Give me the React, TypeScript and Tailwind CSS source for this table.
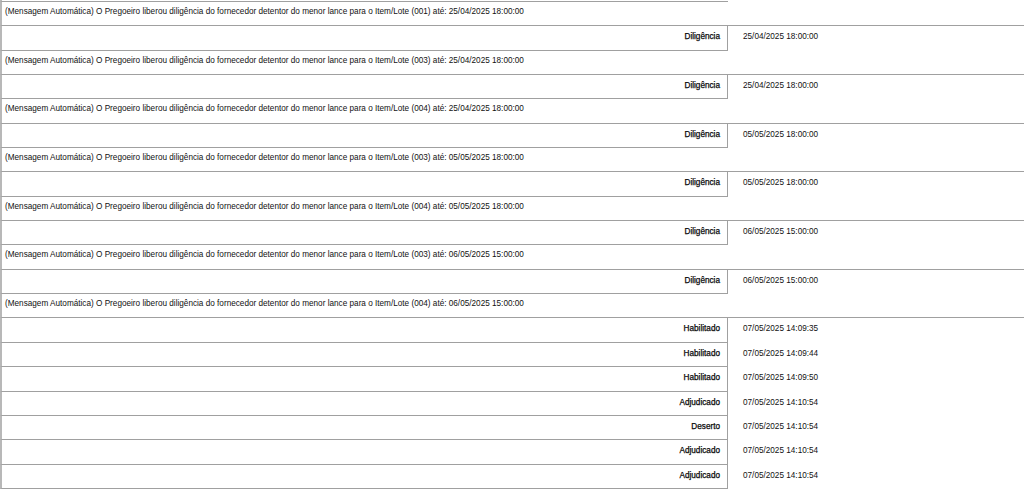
const entries = [
  { item: "001", until: "25/04/2025 18:00:00", status: "Diligência", date: "25/04/2025 18:00:00" },
  { item: "003", until: "25/04/2025 18:00:00", status: "Diligência", date: "25/04/2025 18:00:00" },
  { item: "004", until: "25/04/2025 18:00:00", status: "Diligência", date: "05/05/2025 18:00:00" },
  { item: "003", until: "05/05/2025 18:00:00", status: "Diligência", date: "05/05/2025 18:00:00" },
  { item: "004", until: "05/05/2025 18:00:00", status: "Diligência", date: "06/05/2025 15:00:00" },
  { item: "003", until: "06/05/2025 15:00:00", status: "Diligência", date: "06/05/2025 15:00:00" },
]

const finals = [
  { status: "Habilitado", date: "07/05/2025 14:09:35" },
  { status: "Habilitado", date: "07/05/2025 14:09:44" },
  { status: "Habilitado", date: "07/05/2025 14:09:50" },
  { status: "Adjudicado", date: "07/05/2025 14:10:54" },
  { status: "Deserto", date: "07/05/2025 14:10:54" },
  { status: "Adjudicado", date: "07/05/2025 14:10:54" },
  { status: "Adjudicado", date: "07/05/2025 14:10:54" },
]

function MessageRow({ item, until }: { item: string; until: string }) {
  return (
    <div className="h-[24.35px] border-l-2 border-b border-l-[#b8b8b8] border-b-[#a0a0a0] pl-[3px] pt-[4px] leading-[12px]">
      (Mensagem Automática) O Pregoeiro liberou diligência do fornecedor detentor do menor lance para o Item/Lote ({item}) até: {until}
    </div>
  )
}

function StatusRow({ status, date }: { status: string; date: string }) {
  return (
    <div className="flex h-[24.35px]">
      <div className="w-[728px] shrink-0 border-l-2 border-r border-b border-l-[#b8b8b8] border-r-[#a0a0a0] border-b-[#a0a0a0] pr-[7px] pt-[5px] text-right leading-[12px] [-webkit-text-stroke:0.25px_#000]">
        {status}
      </div>
      <div className="pl-[15px] pt-[5px] leading-[12px]">{date}</div>
    </div>
  )
}

export default function App() {
  return (
    <div className="h-[494px] w-[1024px] overflow-hidden bg-white text-[8.2px] text-[#111]" style={{ fontFamily: '"Liberation Sans", Arial, sans-serif' }}>
      <div className="h-[2px] w-[728px] border-l-2 border-b border-l-[#b8b8b8] border-b-[#a0a0a0]" />
      {entries.map((e, i) => (
        <div key={i}>
          <MessageRow item={e.item} until={e.until} />
          <StatusRow status={e.status} date={e.date} />
        </div>
      ))}
      <MessageRow item="004" until="06/05/2025 15:00:00" />
      {finals.map((f, i) => (
        <StatusRow key={i} status={f.status} date={f.date} />
      ))}
    </div>
  )
}
